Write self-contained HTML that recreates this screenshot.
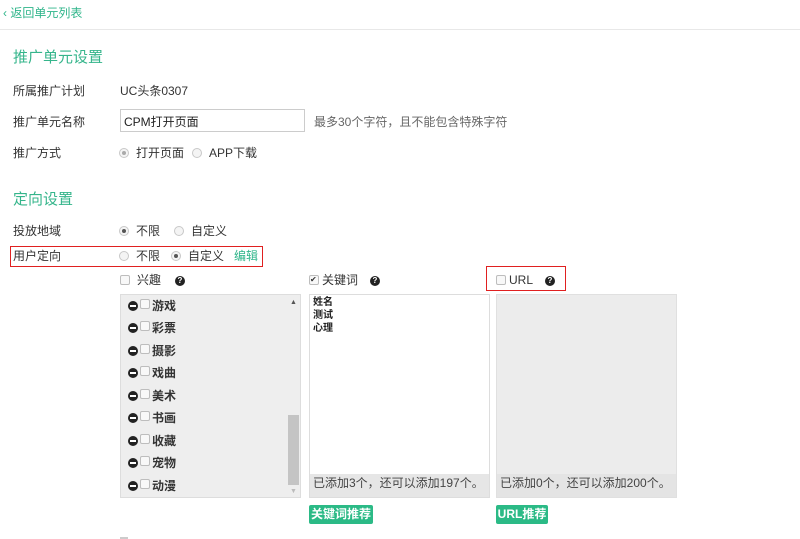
<!DOCTYPE html>
<html><head><meta charset="utf-8"><style>
body{margin:0;width:800px;height:539px;overflow:hidden;background:#fff;font-family:"Liberation Sans","Noto Sans CJK SC",sans-serif;font-size:12px;color:#333;position:relative}
.a{position:absolute;white-space:nowrap;line-height:14px}
.g{color:#2fb58a}
.h{font-size:15px;color:#35b58b;line-height:18px}
.r{position:absolute;width:8px;height:8px;border:1px solid #c8c8c8;border-radius:50%;background:#f4f4f4}
.r.on::after{content:"";position:absolute;left:2px;top:2px;width:4px;height:4px;border-radius:50%;background:#555}
.r.dis.on::after{background:#aaa}
.c{position:absolute;width:8px;height:8px;border:1px solid #bdbdbd;border-radius:2px;background:#f8f8f8}
.q{position:absolute;width:10px;height:10px;border-radius:50%;background:#222;color:#fff;font-size:8px;font-weight:bold;line-height:10px;text-align:center}
.m{position:absolute;width:10px;height:10px;border-radius:50%;background:#222}
.m::after{content:"";position:absolute;left:2px;top:4px;width:6px;height:2px;background:#fff}
.it{position:absolute;left:152px;font-weight:bold;color:#333}
.btn{position:absolute;height:19px;background:#2bba86;color:#fff;font-weight:bold;line-height:19px;text-align:center;border-radius:2px}
</style></head><body>
<div class="a g" style="left:3px;top:6px">‹ 返回单元列表</div>
<div style="position:absolute;left:0;top:29px;width:800px;height:1px;background:#e8e8e8"></div>
<div class="a h" style="left:13px;top:49px">推广单元设置</div>
<div class="a" style="left:13px;top:84px">所属推广计划</div>
<div class="a" style="left:120px;top:84px">UC头条0307</div>
<div class="a" style="left:13px;top:115px">推广单元名称</div>
<div style="position:absolute;left:120px;top:109px;width:185px;height:23px;border:1px solid #ccc;box-sizing:border-box"></div>
<div class="a" style="left:124px;top:115px;color:#222">CPM打开页面</div>
<div class="a" style="left:314px;top:115px;color:#666">最多30个字符，且不能包含特殊字符</div>
<div class="a" style="left:13px;top:146px">推广方式</div>
<div class="r dis on" style="left:119px;top:148px"></div><div class="a" style="left:136px;top:146px">打开页面</div>
<div class="r" style="left:192px;top:148px"></div><div class="a" style="left:209px;top:146px">APP下载</div>
<div class="a h" style="left:13px;top:191px">定向设置</div>
<div class="a" style="left:13px;top:224px">投放地域</div>
<div class="r on" style="left:119px;top:226px"></div><div class="a" style="left:136px;top:224px">不限</div>
<div class="r" style="left:174px;top:226px"></div><div class="a" style="left:191px;top:224px">自定义</div>
<div style="position:absolute;left:10px;top:246px;width:253px;height:21px;border:1px solid #e02020;box-sizing:border-box"></div>
<div class="a" style="left:13px;top:249px">用户定向</div>
<div class="r" style="left:119px;top:251px"></div><div class="a" style="left:136px;top:249px">不限</div>
<div class="r on" style="left:171px;top:251px"></div><div class="a" style="left:188px;top:249px">自定义</div>
<div class="a g" style="left:234px;top:249px">编辑</div>
<div class="c" style="left:120px;top:275px"></div><div class="a" style="left:137px;top:273px">兴趣</div><div class="q" style="left:175px;top:276px">?</div>
<div class="c" style="left:309px;top:275px;font-size:8px;line-height:8px;color:#333">✔</div><div class="a" style="left:322px;top:273px">关键词</div><div class="q" style="left:370px;top:276px">?</div>
<div style="position:absolute;left:486px;top:266px;width:80px;height:25px;border:1px solid #e02020;box-sizing:border-box"></div>
<div class="c" style="left:496px;top:275px"></div><div class="a" style="left:509px;top:273px">URL</div><div class="q" style="left:545px;top:276px">?</div>
<div style="position:absolute;left:120px;top:294px;width:181px;height:204px;border:1px solid #ddd;box-sizing:border-box;background:#eee"></div>
<div style="position:absolute;left:288px;top:415px;width:11px;height:70px;background:#c4c4c4"></div>
<div class="a" style="left:290px;top:296px;font-size:7px;color:#555">▲</div>
<div class="a" style="left:290px;top:485px;font-size:7px;color:#bbb">▼</div>
<div class="m" style="left:128px;top:301px"></div><div class="c" style="left:140px;top:299px"></div><div class="a it" style="top:299px">游戏</div>
<div class="m" style="left:128px;top:323px"></div><div class="c" style="left:140px;top:321px"></div><div class="a it" style="top:321px">彩票</div>
<div class="m" style="left:128px;top:346px"></div><div class="c" style="left:140px;top:344px"></div><div class="a it" style="top:344px">摄影</div>
<div class="m" style="left:128px;top:368px"></div><div class="c" style="left:140px;top:366px"></div><div class="a it" style="top:366px">戏曲</div>
<div class="m" style="left:128px;top:391px"></div><div class="c" style="left:140px;top:389px"></div><div class="a it" style="top:389px">美术</div>
<div class="m" style="left:128px;top:413px"></div><div class="c" style="left:140px;top:411px"></div><div class="a it" style="top:411px">书画</div>
<div class="m" style="left:128px;top:436px"></div><div class="c" style="left:140px;top:434px"></div><div class="a it" style="top:434px">收藏</div>
<div class="m" style="left:128px;top:458px"></div><div class="c" style="left:140px;top:456px"></div><div class="a it" style="top:456px">宠物</div>
<div class="m" style="left:128px;top:481px"></div><div class="c" style="left:140px;top:479px"></div><div class="a it" style="top:479px">动漫</div>
<div style="position:absolute;left:309px;top:294px;width:181px;height:204px;border:1px solid #ddd;box-sizing:border-box;background:#fff"></div>
<div class="a" style="left:313px;top:296px;font-size:10px;font-weight:bold;line-height:13px;color:#222">姓名<br>测试<br>心理</div>
<div style="position:absolute;left:310px;top:474px;width:179px;height:23px;background:#e6e6e6"></div>
<div class="a" style="left:313px;top:476px;color:#444">已添加3个，还可以添加197个。</div>
<div style="position:absolute;left:496px;top:294px;width:181px;height:204px;border:1px solid #e0e0e0;box-sizing:border-box;background:#ececec"></div>
<div style="position:absolute;left:497px;top:474px;width:179px;height:23px;background:#e4e4e4"></div>
<div class="a" style="left:500px;top:476px;color:#444">已添加0个，还可以添加200个。</div>
<div class="btn" style="left:309px;top:505px;width:64px">关键词推荐</div>
<div class="btn" style="left:496px;top:505px;width:52px">URL推荐</div>
<div style="position:absolute;left:120px;top:537px;width:8px;height:2px;background:#ccc"></div>
</body></html>
